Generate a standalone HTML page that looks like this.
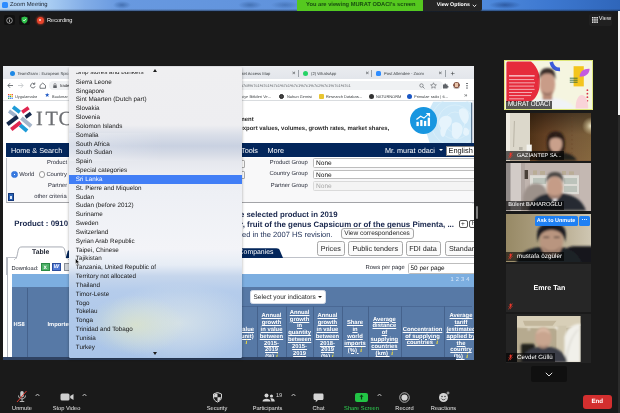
<!DOCTYPE html>
<html lang="en">
<head>
<meta charset="utf-8">
<title>Zoom Meeting</title>
<style>
*{box-sizing:border-box;margin:0;padding:0;text-rendering:geometricPrecision;-webkit-font-smoothing:antialiased}
html,body{width:620px;height:413px;overflow:hidden;background:#1b1b1b;font-family:"Liberation Sans",sans-serif;}
#root{position:relative;width:620px;height:413px;overflow:hidden;background:#1a1a1a;filter:blur(0.42px)}
.abs{position:absolute}
.t{position:absolute;white-space:nowrap;line-height:1}
/* ---------- window title bar ---------- */
#titlebar{left:0;top:0;width:620px;height:11.4px;background:radial-gradient(ellipse 9px 4px at 122px 5px,rgba(40,80,140,.55),rgba(40,80,140,0)),radial-gradient(ellipse 12px 4px at 250px 5px,rgba(40,80,140,.5),rgba(40,80,140,0)),radial-gradient(ellipse 14px 4px at 285px 5px,rgba(40,80,140,.4),rgba(40,80,140,0)),radial-gradient(ellipse 16px 4px at 505px 5px,rgba(20,50,110,.5),rgba(20,50,110,0)),linear-gradient(90deg,#b4d4f4 0,#a8ccf2 50px,#82ade7 85px,#6899e0 120px,#5f92dc 300px,#4f8adc 482px,#3d78d0 550px,#2f66ba 620px)}
#titlebar .fade{left:0;top:9.2px;width:620px;height:2.4px;background:linear-gradient(180deg,rgba(40,60,90,0),rgba(20,30,45,.85))}
#zicon{left:1.6px;top:2px;width:6.6px;height:6px;border-radius:1.6px;background:#2d8cff}
#banner{left:297px;top:0;width:126px;height:10.5px;background:#55c81f;color:#184d10;font-size:5.72px;font-weight:bold}
#viewopt{left:423px;top:0;width:59px;height:10.5px;background:#262626;color:#fff;font-size:5.25px;font-weight:bold;border-radius:0 0 2px 0}
/* ---------- zoom chrome ---------- */
.ibox{position:absolute;top:15px;width:11px;height:10.4px;border-radius:2px;background:#101010}
.tb{position:absolute;top:406.7px;font-size:5.7px;color:#e6e6e6;white-space:nowrap;line-height:1;transform:translateX(-50%)}
.car{position:absolute;top:391px;font-size:6px;color:#cfcfcf;line-height:1}
#end{left:582.5px;top:395px;width:29.5px;height:13.5px;border-radius:3px;background:#d32f2f;color:#fff;font-size:6.2px;font-weight:bold;text-align:center;line-height:13.5px}
#viewbtn{left:589px;top:14px;width:23px;height:12px;border-radius:2px;background:#202020;color:#f2f2f2;font-size:6.6px}

/* ---------- shared screen ---------- */
#share{left:3px;top:65.5px;width:471px;height:294px;overflow:hidden;background:#fff}
#sh{left:-3px;top:-65.5px;width:620px;height:413px}
#tabs{left:3px;top:65.5px;width:471px;height:13.5px;background:linear-gradient(180deg,#eaecf0,#e3e6eb)}
.tab{position:absolute;top:71.6px;font-size:4.15px;color:#3c4043;white-space:nowrap;line-height:1}
.tx{position:absolute;top:70.5px;font-size:6.2px;color:#3c4043;line-height:1}
#addr{left:3px;top:79px;width:471px;height:13px;background:#fff}
#pill{left:49px;top:81px;width:394px;height:8.6px;border-radius:4.3px;background:#eff1f3}
#bm{left:3px;top:92px;width:471px;height:9px;background:#fff;border-bottom:0.6px solid #d9dcdf}
.bk{position:absolute;top:94.9px;font-size:3.95px;color:#3c4043;white-space:nowrap;line-height:1}
.fav{position:absolute;top:94px;width:5px;height:5px;border-radius:50%}
#nav{left:6px;top:143.3px;width:468px;height:14.2px;background:#03265b}
.nv{position:absolute;top:146.7px;font-size:7.25px;color:#fff;white-space:nowrap;line-height:1}
.lb{position:absolute;font-size:5.85px;color:#262a38;white-space:nowrap;line-height:1}
.sel{position:absolute;left:313px;width:165px;height:9.8px;border:0.6px solid #bdbdbd;border-radius:1.5px;background:#fff;font-size:6.6px;color:#111;line-height:10.4px;padding-left:2px}
.hd{position:absolute;font-size:7.82px;font-weight:bold;color:#18264c;white-space:nowrap;line-height:1}
.btn{position:absolute;top:241px;height:14.6px;border:0.7px solid #a8a8a8;border-radius:2.5px;background:#fbfbfb;font-size:7.2px;color:#222;line-height:13.6px;text-align:center;white-space:nowrap;overflow:hidden}
.th{position:absolute;font-size:5.85px;font-weight:bold;color:#fff;text-align:center;line-height:6.85px;text-decoration:underline;text-decoration-thickness:0.55px;text-underline-offset:0.6px;white-space:nowrap;transform:translateX(-50%)}
.th i{color:#f2de3e;font-size:6.8px;font-family:"Liberation Serif",serif;font-weight:bold;text-decoration:none;display:inline-block}
.vs{position:absolute;top:306px;width:0.8px;height:52px;background:#45628c}

/* ---------- dropdown ---------- */
#dd{left:69px;top:67px;width:172.5px;height:290.5px;overflow:hidden;border-radius:1.5px;box-shadow:0 1px 3px rgba(0,0,0,.35);
background:radial-gradient(ellipse 50px 30px at 66px 258px,rgba(224,230,196,.7),rgba(224,232,206,.35) 55%,rgba(224,232,210,0) 100%),radial-gradient(ellipse 78px 40px at 110px 256px,rgba(226,234,232,.7),rgba(226,234,236,.35) 55%,rgba(226,234,236,0) 100%),linear-gradient(90deg,rgba(255,255,255,.3) 0,rgba(255,255,255,0) 55%) 0 66px/100% 28px no-repeat,linear-gradient(180deg,#efeff1 0,#eeeef1 58px,#d9dee8 68px,#c9d1e1 79px,#d6dbe6 87px,#e6e8ee 95px,#eceef3 108px,#eef0f5 130px,#f3f4f8 182px,#e6ecf5 198px,#c6d6ec 209px,#b5cceb 224px,#a9c4e8 290px)}
.di{position:absolute;left:6.8px;font-size:6.3px;color:#151515;white-space:nowrap;line-height:1}
#ddsel{left:0;top:108.2px;width:172.5px;height:8.6px;background:#417ef6}
/* ---------- participants ---------- */
#panel{left:476px;top:11px;width:140px;height:402px;background:#212121}
.tile{position:absolute;left:506.2px;width:85.2px;overflow:hidden;background:#222}
.nm{position:absolute;left:0;bottom:0.5px;height:8.9px;background:rgba(0,0,0,.62);color:#fff;font-size:6.6px;line-height:9px;padding:0 2px 0 2px;white-space:nowrap}
.mut{display:inline-block;width:5px;height:7px;vertical-align:-1.4px;margin-right:3.6px;margin-left:0.3px}
</style>
</head>
<body>
<div id="root">

<!-- title bar -->
<div id="titlebar" class="abs">
  <div class="abs fade"></div>
  <div id="zicon" class="abs"></div>
  <div class="t" style="left:10px;top:3.2px;font-size:5.9px;color:#1c2430">Zoom Meeting</div>
  <div id="banner" class="abs"><div class="t" style="left:9px;top:3.2px">You are viewing MURAT ODACI's screen</div></div>
  <div id="viewopt" class="abs"><div class="t" style="left:13.8px;top:3.3px">View Options</div><svg class="abs" style="left:49px;top:3.9px" width="5" height="4" viewBox="0 0 5 4"><path d="M0.8 0.8 L2.5 2.6 L4.2 0.8" fill="none" stroke="#fff" stroke-width="0.9"/></svg></div>
</div>

<!-- shared screen -->
<div id="share" class="abs"><div id="sh" class="abs">
  <!-- browser tab strip -->
  <div id="tabs" class="abs"></div>
  <div class="abs" style="left:9.8px;top:71px;width:5px;height:5px;border-radius:50%;background:#1e88e5"></div>
  <div class="tab" style="left:17.5px">TeamGram : European Spic</div>
  <div class="tab" style="left:240px">rket Access Map</div>
  <div class="tx" style="left:292px">×</div>
  <div class="abs" style="left:298.4px;top:70px;width:0.6px;height:7px;background:#9aa0a6"></div>
  <div class="abs" style="left:302.8px;top:71.2px;width:5px;height:5px;border-radius:50%;background:#25d366"></div>
  <div class="tab" style="left:311px">(2) WhatsApp</div>
  <div class="tx" style="left:365.5px">×</div>
  <div class="abs" style="left:371.4px;top:70px;width:0.6px;height:7px;background:#9aa0a6"></div>
  <div class="abs" style="left:376px;top:71px;width:5.2px;height:5.2px;border-radius:1.6px;background:#2d8cff"></div>
  <div class="tab" style="left:384px">Post Attendee - Zoom</div>
  <div class="tx" style="left:438.5px">×</div>
  <div class="abs" style="left:445.4px;top:70px;width:0.6px;height:7px;background:#9aa0a6"></div>
  <div class="tx" style="left:450.6px;top:69.8px;font-size:7.6px">+</div>
  <!-- address bar -->
  <div id="addr" class="abs"></div>
  <div id="pill" class="abs"></div>
  <svg class="abs" style="left:7px;top:82px" width="40" height="7" viewBox="0 0 80 14"><g fill="none" stroke="#5f6368" stroke-width="1.7"><path d="M12 7 H2 M6 2.5 L1.8 7 L6 11.5"/><path d="M22 7 H32 M28 2.5 L32.2 7 L28 11.5" stroke="#c4c7ca"/><path d="M55 4 A4.6 4.6 0 1 0 56.2 8.5 M55.5 1 V4.5 H52"/><path d="M66 7 L71.5 2 L77 7 V12.5 H66 Z"/></g></svg>
  <svg class="abs" style="left:52.5px;top:82.6px" width="4" height="5.5" viewBox="0 0 8 11"><rect x="0.5" y="4.5" width="7" height="6" rx="1" fill="#5f6368"/><path d="M2 4.5 V3 A2 2 0 0 1 6 3 V4.5" fill="none" stroke="#5f6368" stroke-width="1.2"/></svg>
  <div class="t" style="left:60px;top:83.6px;font-size:4.1px;color:#202124">trade</div>
  <div class="t" style="left:239.5px;top:83.6px;font-size:4.05px;color:#5f6368">%7c8%7c1%7c1%7c1%7c1%7c1%7c1%7c2%7c1%7c1%7c1</div>
  <svg class="abs" style="left:419px;top:82.5px" width="6" height="6" viewBox="0 0 12 12"><circle cx="5" cy="5" r="3.4" fill="none" stroke="#5f6368" stroke-width="1.3"/><path d="M7.6 7.6 L11 11" stroke="#5f6368" stroke-width="1.4"/></svg>
  <svg class="abs" style="left:429.5px;top:82px" width="7" height="7" viewBox="0 0 14 14"><path d="M7 1.5 L8.7 5.3 L12.8 5.7 L9.7 8.4 L10.6 12.4 L7 10.3 L3.4 12.4 L4.3 8.4 L1.2 5.7 L5.3 5.3 Z" fill="none" stroke="#5f6368" stroke-width="1.2"/></svg>
  <svg class="abs" style="left:442px;top:82px" width="7" height="7" viewBox="0 0 14 14"><path d="M2 5 H5 A1.6 1.6 0 1 1 8 5 H11 V8 A1.6 1.6 0 1 1 11 11 V13 H2 Z" fill="#5f6368"/></svg>
  <div class="abs" style="left:452.5px;top:81.6px;width:7.6px;height:7.6px;border-radius:50%;background:radial-gradient(circle at 50% 42%,#e8c3a8 0 35%,#8a5a4a 36% 60%,#b9b2b0 61%)"></div>
  <div class="abs" style="left:466.4px;top:82.6px;width:1.2px;height:1.2px;border-radius:50%;background:#5f6368;box-shadow:0 2.2px 0 #5f6368,0 4.4px 0 #5f6368"></div>
  <!-- bookmarks bar -->
  <div id="bm" class="abs"></div>
  <svg class="abs" style="left:7.5px;top:93.5px" width="5" height="5" viewBox="0 0 5 5"><rect x="0" y="0" width="1.3" height="1.3" fill="#ea4335"/><rect x="1.8" y="0" width="1.3" height="1.3" fill="#fbbc04"/><rect x="3.6" y="0" width="1.3" height="1.3" fill="#ea4335"/><rect x="0" y="1.8" width="1.3" height="1.3" fill="#4285f4"/><rect x="1.8" y="1.8" width="1.3" height="1.3" fill="#34a853"/><rect x="3.6" y="1.8" width="1.3" height="1.3" fill="#fbbc04"/><rect x="0" y="3.6" width="1.3" height="1.3" fill="#34a853"/><rect x="1.8" y="3.6" width="1.3" height="1.3" fill="#4285f4"/><rect x="3.6" y="3.6" width="1.3" height="1.3" fill="#4285f4"/></svg>
  <div class="bk" style="left:15px">Uygulamalar</div>
  <div class="bk" style="left:44.5px;top:93px;color:#1a56c4;font-size:6px">★</div>
  <div class="bk" style="left:52px">Bookmar</div>
  <div class="bk" style="left:240px">rkiye Bitkileri Ve...</div>
  <div class="fav" style="left:279px;background:#444;border:0.8px solid #222"></div>
  <div class="bk" style="left:287px">Nuhun Gemisi</div>
  <div class="fav" style="left:319px;border-radius:1px;background:#e8c531"></div>
  <div class="bk" style="left:326px">Research Databas...</div>
  <div class="fav" style="left:368.5px;background:#333"></div>
  <div class="bk" style="left:376px">NATURNORM</div>
  <div class="fav" style="left:406.5px;background:#1a56c4"></div>
  <div class="bk" style="left:414px">Primulae radix | 6...</div>
  <div class="bk" style="left:464px;font-size:6px;top:93px">»</div>

  <!-- page header -->
  <svg class="abs" style="left:416px;top:101px" width="58" height="43" viewBox="416 101 58 43"><path d="M433.3 101.7 L423 121.7 L430 144 H471.4 V101.7 Z" fill="#cde8f8"/><g fill="none" stroke="#dcf0fa" stroke-width="0.8"><circle cx="455" cy="122" r="10"/><circle cx="455" cy="122" r="17"/><circle cx="455" cy="122" r="24"/></g><g fill="#e6f4fc"><path d="M440 119 C443 115 449 115 451 118 C453 121 451 126 448 128 C445 131 446 136 443 137 C440 136 440 131 441 128 C439 125 438 122 440 119 Z"/><path d="M452 124 C455 121 460 122 462 126 C464 131 461 137 457 139 C453 139 451 135 452 131 Z"/><path d="M459 110 C462 107 466 108 468 112 C470 117 468 123 465 124 C462 122 458 115 459 110 Z"/><path d="M464 128 C467 127 470 130 469 134 C467 137 464 136 463 133 Z"/></g><rect x="471" y="102.6" width="1.5" height="41" fill="#5f7b96"/><rect x="472.5" y="101" width="1.6" height="43" fill="#e4e6ea"/></svg>
  <div class="abs" style="left:409.9px;top:106.9px;width:27px;height:27px;border-radius:50%;background:#1896e0"></div>
  <svg class="abs" style="left:415.4px;top:112.2px" width="16" height="15" viewBox="0 0 34 32"><g fill="#fff"><rect x="3" y="21" width="5" height="9"/><rect x="11" y="17" width="5" height="13"/><rect x="19" y="19" width="5" height="11"/><rect x="27" y="12" width="5" height="18"/></g><path d="M3 16 L12 9 L19 13 L29 4" fill="none" stroke="#fff" stroke-width="2.6"/><path d="M23 2 H32 V11 Z" fill="#fff"/></svg>
  <!-- ITC logo -->
  <svg class="abs" style="left:2px;top:100px" width="70" height="42" viewBox="0 0 620 372"><g fill="none" stroke-linecap="butt"><path d="M98 62 L158 108" stroke="#1e9bd7" stroke-width="34"/><path d="M62 98 L122 142" stroke="#9fb3cc" stroke-width="32"/><path d="M172 160 L258 232" stroke="#a6b6cb" stroke-width="36"/><path d="M160 222 L222 275" stroke="#1e9bd7" stroke-width="34"/><path d="M178 108 L236 68" stroke="#e0254f" stroke-width="32"/><path d="M208 152 L256 118" stroke="#14284b" stroke-width="32"/><path d="M48 215 L138 148" stroke="#14284b" stroke-width="36"/><path d="M82 262 L165 198" stroke="#e0254f" stroke-width="34"/></g></svg>
  <div class="t" style="left:36px;top:108.9px;font-family:'Liberation Serif',serif;font-size:20.2px;color:#6b6d71;-webkit-text-stroke:0.25px #6b6d71"><span style="letter-spacing:2.7px">I</span><span style="letter-spacing:0.6px">T</span>C</div>
  <div class="t" style="left:239.5px;top:117.8px;font-size:5.95px;font-weight:bold;color:#2b2b2b">ment</div>
  <div class="t" style="left:239.5px;top:126.5px;font-size:5.95px;font-weight:bold;color:#2b2b2b">export values, volumes, growth rates, market shares,</div>

  <!-- nav bar -->
  
  <div id="nav" class="abs"></div>
  <div class="nv" style="left:11px">Home &amp; Search</div>
  <div class="nv" style="left:241px">Tools</div>
  <div class="nv" style="left:267.5px">More</div>
  <div class="nv" style="left:385px">Mr. murat odaci</div>
  <div class="abs" style="left:439.2px;top:149.4px;width:0;height:0;border-left:2.1px solid transparent;border-right:2.1px solid transparent;border-top:2.4px solid #fff"></div>
  <div class="abs" style="left:445.5px;top:145.5px;width:32px;height:10px;background:#fff;border:0.6px solid #888;font-size:7.4px;color:#111;line-height:8.8px;padding-left:2px">English</div>

  <div class="abs" style="left:471.6px;top:157.5px;width:2.4px;height:46px;background:#e3e5e9"></div>
  <div class="abs" style="left:471.8px;top:157.5px;width:2px;height:14px;background:#7f8792"></div>
  <!-- search form -->
  <div class="abs" style="left:6px;top:157.5px;width:468px;height:45.4px;background:#f8f8f9;border-left:0.6px solid #b9bcc4;border-bottom:0.8px solid #a3a4a8"></div>
  <div class="lb" style="left:47px;top:160.9px">Product</div>
  <div class="abs" style="left:11.2px;top:171.2px;width:6.8px;height:6.8px;border-radius:50%;border:0.7px solid #2a6fdb;background:radial-gradient(circle,#fff 0 18%,#3a7be0 24% 100%)"></div>
  <div class="lb" style="left:19.2px;top:172.6px">World</div>
  <div class="abs" style="left:38.8px;top:171.2px;width:6.6px;height:6.6px;border-radius:50%;border:0.7px solid #9a9a9a;background:#fff"></div>
  <div class="lb" style="left:46.4px;top:172.6px">Country</div>
  <div class="lb" style="left:48px;top:183.9px">Partner</div>
  <div class="abs" style="left:7.5px;top:192.8px;width:6.4px;height:8.2px;background:#2a62b4;border:0.7px solid #16397a"><div class="abs" style="left:1.4px;top:1.8px;width:2.4px;height:3px;background:#dfe9fa"></div></div>
  <div class="lb" style="left:34.2px;top:194.5px">other criteria</div>
  <div class="lb" style="left:269.8px;top:161px">Product Group</div>
  <div class="lb" style="left:269.4px;top:172.4px">Country Group</div>
  <div class="lb" style="left:270.8px;top:183.8px">Partner Group</div>
  <div class="sel" style="top:158.4px">None</div>
  <div class="sel" style="top:169.6px">None</div>
  <div class="sel" style="top:180.8px;color:#a8a8a8;border-color:#dadada;background:#f4f4f4">None</div>
  <div class="abs" style="left:240px;top:159.5px;width:4.6px;height:8px;border:0.6px solid #aaa;border-left:none;border-radius:0 1.5px 1.5px 0;background:#fff"></div>
  <div class="abs" style="left:240px;top:170.7px;width:4.6px;height:8px;border:0.6px solid #aaa;border-left:none;border-radius:0 1.5px 1.5px 0;background:#fff"></div>

  <!-- product heading -->
  <div class="hd" style="left:14.2px;top:220.3px">Product : 0910</div>
  <div class="hd" style="left:240px;top:211px;font-size:7.8px">e selected product in 2019</div>
  <div class="hd" style="left:240px;top:220.8px;font-size:7.88px">r, fruit of the genus Capsicum or of the genus Pimenta, ...</div>
  <div class="abs" style="left:458.5px;top:219.5px;width:9px;height:8.5px;border:0.7px solid #555;border-radius:2px;background:#fff;font-size:6.5px;line-height:7px;text-align:center;color:#222">+</div>
  <div class="abs" style="left:469.4px;top:219.5px;width:9px;height:8.5px;border:0.7px solid #555;border-radius:2px;background:#fff;font-size:6px;line-height:7px;color:#222;padding-left:1.4px">H</div>
  <div class="t" style="left:240px;top:230.8px;font-size:7.54px;color:#1b2c54">ted in the 2007 HS revision.</div>
  <div class="btn" style="left:340.5px;top:228.3px;width:73px;height:11px;font-size:6.5px;line-height:9.6px;border-radius:3px">View correspondences</div>

  <!-- tabs + buttons -->
  <div class="abs" style="left:6px;top:257px;width:468px;height:19px;background:#fff;border-top:0.7px solid #bfc2c9;border-left:0.6px solid #b9bcc4"></div>
  <svg class="abs" style="left:14px;top:245.8px" width="56" height="14.2" viewBox="0 0 56 15" preserveAspectRatio="none"><path d="M0.5 14.5 C3 13.5 3.2 9 4.2 4.5 C4.8 2 5.6 1 8 1 H47 C49.4 1 50.2 2 50.8 4.5 C51.8 9 52 13.5 54.5 14.5 Z" fill="#fff" stroke="#8f949e" stroke-width="0.8"/><path d="M1 14.6 H54" stroke="#fff" stroke-width="1.6"/></svg>
  <svg class="abs" style="left:64.6px;top:250px" width="5" height="8.4" viewBox="0 0 5 8.4"><path d="M0.6 8.4 L2.6 1.6 C3 0.6 3.6 0.2 5 0.2 V8.4 Z" fill="#03265b"/></svg>
  <div class="t" style="left:32px;top:249.9px;font-size:6.8px;font-weight:bold;color:#1d2230">Table</div>
  <svg class="abs" style="left:236px;top:247.6px" width="50.6" height="10.6" viewBox="0 0 52 12.4" preserveAspectRatio="none"><path d="M0 12.4 V0.4 H41.5 C43.6 0.4 44.4 1.2 45.2 3.2 L48.6 12.4 Z" fill="#03265b"/></svg>
  <div class="t" style="left:238.6px;top:249.8px;font-size:6.9px;color:#fff">Companies</div>
  <div class="btn" style="left:317px;width:27.5px">Prices</div>
  <div class="btn" style="left:348px;width:54.5px">Public tenders</div>
  <div class="btn" style="left:405.5px;width:35px">FDI data</div>
  <div class="btn" style="left:444.5px;width:40px;text-align:left;padding-left:3.5px">Standar</div>

  <!-- download row -->
  <div class="t" style="left:11.5px;top:266.6px;font-size:5.7px;color:#20242e">Download:</div>
  <div class="abs" style="left:41px;top:262.8px;width:8.6px;height:8.2px;background:#4db168;border:0.6px solid #2a8a45"><div class="t" style="left:1.6px;top:0.9px;font-size:6px;font-weight:bold;color:#fff">x</div></div>
  <div class="abs" style="left:52px;top:262.8px;width:8.6px;height:8.2px;background:#4f78d6;border:0.6px solid #2c4d9c"><div class="t" style="left:0.8px;top:1px;font-size:5.6px;font-weight:bold;font-style:italic;color:#fff">W</div></div>
  <div class="abs" style="left:64px;top:262.8px;width:8px;height:8.2px;background:#cfd3d8;border:0.6px solid #8a8f97"></div>
  <div class="t" style="left:365.5px;top:266.3px;font-size:5.85px;color:#20242e">Rows per page</div>
  <div class="sel" style="left:407.5px;top:263.4px;width:70px;font-size:6.4px;height:10.4px;line-height:10.4px">50 per page</div>

  <!-- table -->
  <div class="abs" style="left:6px;top:275px;width:468px;height:86px;background:#fff"></div>
  <div class="abs" style="left:12px;top:274px;width:462.4px;height:13px;background:#7caee0"></div>
  <div class="abs" style="left:12px;top:286.6px;width:462.4px;height:73px;background:#5779a6"></div>
  <div class="abs" style="left:6.8px;top:258px;width:0.7px;height:101px;background:#b4b8c0"></div>
  <div class="t" style="left:450.5px;top:278.2px;font-size:5.7px;color:#d9e7f8;word-spacing:0.5px">1 2 3 4</div>
  <div class="abs" style="left:27.4px;top:288px;width:0.8px;height:70px;background:#45628c"></div>
  <div class="t" style="left:13.5px;top:323.4px;font-size:5.76px;font-weight:bold;color:#fff">HS8</div>
  <div class="t" style="left:47.5px;top:323.4px;font-size:5.76px;font-weight:bold;color:#fff">Importers</div>
  <div class="abs" style="left:250px;top:290.4px;width:76px;height:13.8px;border-radius:2.5px;background:#fff;border:0.6px solid #d5dbe6"></div>
  <div class="t" style="left:253.5px;top:294.8px;font-size:6.5px;color:#222">Select your indicators</div>
  <div class="abs" style="left:317.8px;top:296.4px;width:0;height:0;border-left:2.3px solid transparent;border-right:2.3px solid transparent;border-top:2.8px solid #222"></div>
  <div class="abs" style="left:241px;top:305.6px;width:231.4px;height:0.7px;background:#4a6894"></div>
  <div class="vs" style="left:257px"></div><div class="vs" style="left:286px"></div><div class="vs" style="left:313.2px"></div><div class="vs" style="left:341.6px"></div><div class="vs" style="left:368.2px"></div><div class="vs" style="left:400.6px"></div><div class="vs" style="left:444.4px"></div>
  <div class="th" style="left:246.5px;top:326.8px">value<br>/unit)<br><i>i</i></div>
  <div class="th" style="left:271.5px;top:313.2px">Annual<br>growth<br>in value<br>between<br>2015-<br>2019<br>(%) <i>i</i></div>
  <div class="th" style="left:299.6px;top:309.8px">Annual<br>growth<br>in<br>quantity<br>between<br>2015-<br>2019<br>(%) <i>i</i></div>
  <div class="th" style="left:327.4px;top:313.2px">Annual<br>growth<br>in value<br>between<br>2018-<br>2019<br>(%) <i>i</i></div>
  <div class="th" style="left:355px;top:320.2px">Share<br>in<br>world<br>imports<br>(%) <i>&nbsp;i</i></div>
  <div class="th" style="left:384.4px;top:316.6px">Average<br>distance<br>of<br>supplying<br>countries<br>(km) <i>&nbsp;i</i></div>
  <div class="th" style="left:422.5px;top:326.8px">Concentration<br>of supplying<br>countries <i>&nbsp;i</i></div>
  <div class="th" style="left:461px;top:313.2px">Average<br>tariff<br>(estimated<br>applied by<br>the<br>country<br>(%) <i>&nbsp;i</i></div>
  <div class="abs" style="left:3px;top:357.2px;width:453px;height:2.4px;background:#2f4262"></div>
</div></div>

<!-- country dropdown -->
<div id="dd" class="abs">
  <div id="ddsel" class="abs"></div>
  <div class="di" style="top:3.4px">Ship stores and bunkers</div>
  <div class="di" style="top:12.7px">Sierra Leone</div>
  <div class="di" style="top:21.5px">Singapore</div>
  <div class="di" style="top:30.4px">Sint Maarten (Dutch part)</div>
  <div class="di" style="top:39.2px">Slovakia</div>
  <div class="di" style="top:48.0px">Slovenia</div>
  <div class="di" style="top:56.9px">Solomon Islands</div>
  <div class="di" style="top:65.7px">Somalia</div>
  <div class="di" style="top:74.5px">South Africa</div>
  <div class="di" style="top:83.4px">South Sudan</div>
  <div class="di" style="top:92.2px">Spain</div>
  <div class="di" style="top:101.0px">Special categories</div>
  <div class="di" style="top:109.9px;color:#fff">Sri Lanka</div>
  <div class="di" style="top:118.7px">St. Pierre and Miquelon</div>
  <div class="di" style="top:127.5px">Sudan</div>
  <div class="di" style="top:136.4px">Sudan (before 2012)</div>
  <div class="di" style="top:145.2px">Suriname</div>
  <div class="di" style="top:154.0px">Sweden</div>
  <div class="di" style="top:162.9px">Switzerland</div>
  <div class="di" style="top:171.7px">Syrian Arab Republic</div>
  <div class="di" style="top:180.5px">Taipei, Chinese</div>
  <div class="di" style="top:189.4px">Tajikistan</div>
  <div class="di" style="top:198.2px">Tanzania, United Republic of</div>
  <div class="di" style="top:207.0px">Territory not allocated</div>
  <div class="di" style="top:215.9px">Thailand</div>
  <div class="di" style="top:224.7px">Timor-Leste</div>
  <div class="di" style="top:233.5px">Togo</div>
  <div class="di" style="top:242.4px">Tokelau</div>
  <div class="di" style="top:251.2px">Tonga</div>
  <div class="di" style="top:260.0px">Trinidad and Tobago</div>
  <div class="di" style="top:268.9px">Tunisia</div>
  <div class="di" style="top:277.7px">Turkey</div>
  <div class="abs" style="left:0;top:0;width:172.5px;height:5.4px;background:#efeff1"></div>
  <div class="abs" style="left:83.6px;top:2px;width:0;height:0;border-left:2.4px solid transparent;border-right:2.4px solid transparent;border-bottom:3px solid #1c1c1c"></div>
  <div class="abs" style="left:83.6px;top:284.8px;width:0;height:0;border-left:2.4px solid transparent;border-right:2.4px solid transparent;border-top:3px solid #1c1c1c"></div>
  <svg class="abs" style="left:6px;top:190.5px" width="5" height="8" viewBox="0 0 10 16"><path d="M1 1 V12 L3.8 9.6 L5.8 14.4 L7.6 13.6 L5.6 9 H9 Z" fill="#111" stroke="#fff" stroke-width="0.8"/></svg>
</div>

<!-- participants -->
<div class="abs" style="left:476px;top:206.3px;width:2px;height:12.7px;border-radius:1px;background:#7d7d7d"></div>
<svg width="0" height="0" style="position:absolute"><defs><filter id="b1" x="-20%" y="-20%" width="140%" height="140%"><feGaussianBlur stdDeviation="0.9"/></filter><filter id="b2" x="-20%" y="-20%" width="140%" height="140%"><feGaussianBlur stdDeviation="1.6"/></filter></defs></svg>

<!-- tile 1 : active speaker -->
<div class="abs" style="left:503.8px;top:59.8px;width:89.6px;height:50.4px;background:#dde678"></div>
<div class="tile" style="left:505.2px;top:61.2px;width:86.8px;height:47.6px;background:#f5f5e0">
  <svg class="abs" style="left:0;top:0" width="86.8" height="47.6" viewBox="0 0 86.8 47.6">
    <path d="M1.4 2.4 C1.4 1 2.2 0.4 3.6 0.4 H26 C33 6 36.4 16 34.6 26 C33.4 33 30 39 25 41 H1.4 Z" fill="#e62c3c"/>
    <g fill="#fff" opacity=".8"><rect x="4" y="14.2" width="25.6" height="1.3"/><rect x="4" y="18.3" width="25" height="0.75"/><rect x="4" y="21.5" width="26" height="0.75"/><rect x="4" y="24.7" width="25" height="0.75"/><rect x="4" y="27.9" width="25.6" height="0.75"/><rect x="4" y="31.1" width="23" height="0.75"/><rect x="4" y="34.3" width="22" height="0.75"/><rect x="4" y="37.5" width="15" height="0.75"/></g>
    <path d="M46.2 1 C47.4 6.4 50.8 8.6 55 8.4" fill="none" stroke="#3b5bdb" stroke-width="3.6"/>
    <rect x="68.6" y="5.2" width="10.2" height="20.2" fill="#f4c51c"/>
    <path d="M74.6 15.8 C74.6 10.4 79 7.4 84.6 7.8 C84.6 12.8 80.6 16 74.6 15.8 Z" fill="#c45be0"/>
    <g stroke="#1e5c3a" stroke-width="0.8"><path d="M64.8 17.2 H72.6 M64.8 19.2 H72.6 M64.8 21.2 H72.6"/></g>
    <g fill="#d8344a"><circle cx="82.4" cy="29.2" r="0.9"/><circle cx="82.4" cy="32.7" r="0.9"/><circle cx="82.4" cy="36.2" r="0.9"/><circle cx="82.4" cy="39.8" r="0.9"/></g>
    <path d="M70.6 47.6 C70.4 29.6 83.4 29.6 83.2 47.6 Z" fill="#f9d3d8"/>
    <g filter="url(#b1)">
      <path d="M22 47.6 C24 41 32 38 39 36.8 H47 C58 38 66 41 70 47.6 Z" fill="#f0f3f7"/>
      <rect x="37.6" y="31" width="9.6" height="8" fill="#b98a76"/>
      <ellipse cx="42.4" cy="23.4" rx="7.8" ry="12.6" fill="#c99c88"/>
      <path d="M34.4 19 C34 9.6 38 7 42.6 7 C47.6 7 51 9.6 50.4 19 C48.6 14 46.4 12.4 42.4 12.4 C38.4 12.4 36.2 14 34.4 19 Z" fill="#3a2f2a"/>
      <path d="M36.4 29 C38.4 37.4 46.4 37.4 48.4 29 C46 33 38.8 33 36.4 29 Z" fill="#8d6a5c" opacity=".7"/>
    </g>
  </svg>
  <div class="nm" style="left:0.8px;bottom:0.2px;height:7.6px;line-height:8px;font-size:6.3px;letter-spacing:-0.12px;padding-right:1.4px;background:rgba(20,20,20,.7)"><span style="display:inline-block;transform:scale(1,1.14);transform-origin:50% 60%">MURAT ODACI</span></div>
</div>

<!-- tile 2 -->
<div class="tile" style="top:113.1px;height:47.6px;background:#7a5234">
  <svg class="abs" style="left:0;top:0" width="86.5" height="47.6" viewBox="0 0 86.5 47.6">
    <defs><linearGradient id="wd" x1="0" x2="1" y1="0" y2="0"><stop offset="0" stop-color="#553619"/><stop offset=".25" stop-color="#6b4526"/><stop offset=".7" stop-color="#80603c"/><stop offset="1" stop-color="#86683f"/></linearGradient><linearGradient id="wv" x1="0" x2="0" y1="0" y2="1"><stop offset="0" stop-color="#000" stop-opacity=".42"/><stop offset=".45" stop-color="#000" stop-opacity=".08"/><stop offset="1" stop-color="#000" stop-opacity="0"/></linearGradient><radialGradient id="gl" cx="85" cy="13" r="9" gradientUnits="userSpaceOnUse"><stop offset="0" stop-color="#f4eccc" stop-opacity=".95"/><stop offset=".5" stop-color="#e8dcb0" stop-opacity=".45"/><stop offset="1" stop-color="#e8dcb0" stop-opacity="0"/></radialGradient></defs>
    <rect x="24" y="0" width="62.5" height="47.6" fill="url(#wd)"/><rect x="24" y="0" width="62.5" height="47.6" fill="url(#wv)"/><rect x="66" y="0" width="20.5" height="30" fill="url(#gl)"/>
    <rect x="0" y="0" width="24" height="47.6" fill="#dcd8cb"/>
    <rect x="0" y="0" width="4" height="47.6" fill="#eeebe2"/>
    <path d="M8.4 8 L7.6 34" stroke="#b9b4a6" stroke-width="1"/>
    <rect x="20.6" y="31.6" width="5.2" height="7.4" fill="#f2f2ee"/>
    <rect x="13" y="34" width="3.6" height="3" fill="#b8b4a8"/>
    <path d="M66 4 V40" stroke="#6a4528" stroke-width="0.6" stroke-dasharray="1.4 3"/>
    <g filter="url(#b1)">
      <path d="M30 47.6 C33 41 40 39.6 46 39 H54 C62 40 68 42 71 47.6 Z" fill="#23201f"/>
      <path d="M41.4 36 C39.6 24 42 18.4 49.6 18.4 C57.4 18.4 60 24 58.2 37 C57 42 43 42 41.4 36 Z" fill="#2a1c17"/>
      <ellipse cx="49.8" cy="31" rx="6.4" ry="8.6" fill="#c9a08b"/>
      <path d="M43.4 27 C44 21 55.6 21 56.2 27 C53 24.4 46.6 24.4 43.4 27 Z" fill="#2a1c17"/>
    </g>
  </svg>
  <div class="nm"><svg class="mut" viewBox="0 0 10 14"><rect x="3.4" y="0.8" width="3.4" height="7" rx="1.7" fill="#e8392c"/><path d="M1.6 6 C1.6 10.6 8.6 10.6 8.6 6" fill="none" stroke="#e8392c" stroke-width="1.1"/><rect x="4.5" y="9.6" width="1.2" height="2.6" fill="#e8392c"/><path d="M0.6 13 L9.2 1" stroke="#e8392c" stroke-width="1.3"/></svg><span style="font-size:5.5px">GAZIANTEP SA...</span></div>
</div>

<!-- tile 3 -->
<div class="tile" style="top:163.4px;height:47.4px;background:#c0b4ae">
  <svg class="abs" style="left:0;top:0" width="86.5" height="47.6" viewBox="0 0 86.5 47.6">
    <rect x="0" y="0" width="15" height="47.6" fill="#d2cbc7"/><rect x="0" y="0" width="4.5" height="47.6" fill="#908a88"/>
    <rect x="15" y="0" width="4" height="47.6" fill="#b3a8a3"/>
    <rect x="18.6" y="7" width="3.4" height="9" fill="#4a4038"/>
    <rect x="24" y="12.2" width="49" height="19" fill="#dddcd6"/>
    <g fill="#b9ad96"><rect x="27" y="7.4" width="4" height="4.4"/><rect x="34" y="8" width="5" height="3.8"/><rect x="56" y="8" width="4" height="3.8"/><rect x="63" y="8.4" width="5" height="3.4"/></g>
    <g fill="#bcc3bb"><rect x="27" y="15" width="13" height="6"/><rect x="58" y="15" width="13" height="6"/><rect x="58" y="23" width="13" height="6"/></g>
    <rect x="74" y="0" width="12.5" height="47.6" fill="#c4b8b2"/>
    <g filter="url(#b1)">
      <path d="M17 40 C16 28 22 20.6 30 20.6 C38 20.6 42 26 42 40 V47.6 H17 Z" fill="#9c918a"/>
      <path d="M22 47.6 C25 36 33 32 42 30.6 H56 C68 32 76 37 80 47.6 Z" fill="#252932"/>
      <path d="M44 31 L49 41 L54 31 Z" fill="#e8e8ec"/>
      <ellipse cx="48.8" cy="24.6" rx="8.2" ry="11.4" fill="#c59c87"/>
      <path d="M40.2 21 C39.6 11.6 44 9 49 9 C54.4 9 58 11.6 57.4 21 C56 15.6 53 13.6 48.8 13.6 C44.6 13.6 41.6 15.6 40.2 21 Z" fill="#4b4644"/>
      <path d="M43 30 C45 37.6 52.6 37.6 54.6 30 C52 33.6 45.6 33.6 43 30 Z" fill="#8e7468" opacity=".8"/>
    </g>
  </svg>
  <div class="nm" style="font-size:5.75px;padding-right:1.4px">Bülent BAHAROĞLU</div>
</div>

<!-- tile 4 -->
<div class="tile" style="top:214px;height:47.6px;background:#a39572">
  <svg class="abs" style="left:0;top:0" width="86.5" height="47.6" viewBox="0 0 86.5 47.6">
    <defs><linearGradient id="ol" x1="0" x2="1" y1="0" y2="0"><stop offset="0" stop-color="#978965"/><stop offset=".5" stop-color="#b0a385"/><stop offset="1" stop-color="#d0c8b4"/></linearGradient></defs>
    <rect width="86.5" height="47.6" fill="url(#ol)"/>
    <g filter="url(#b1)" transform="translate(-3 0.5) scale(1.04)">
      <path d="M60 47.6 V36 C60 32 64 30.6 70 30.6 H86.5 V47.6 Z" fill="#17181c"/>
      <path d="M12 47.6 C15 37 24 33 34 31.6 H58 C68 34 74 40 76 47.6 Z" fill="#1e2026"/>
      <ellipse cx="46.6" cy="25.4" rx="11" ry="15" fill="#b9957f"/>
      <path d="M33.6 27 C30.6 13 36 8.4 46.6 8.4 C57.6 8.4 63 13 59.6 27 C58.6 20 55 15 46.6 15 C38.4 15 34.6 20 33.6 27 Z" fill="#1d1d22"/>
      <path d="M38 30 C41 42 52.6 42 55.4 30 C52 36 41.4 36 38 30 Z" fill="#8c6e5f" opacity=".7"/>
      <path d="M39 22 H44.4 M49 22 H54.4" stroke="#3a2c28" stroke-width="1.4"/>
    </g>
  </svg>
  <div class="abs" style="left:28.4px;top:1.6px;width:43px;height:10px;border-radius:1.6px;background:#1f80f3;color:#fff;font-size:5.46px;font-weight:bold;line-height:10px;text-align:center;white-space:nowrap">Ask to Unmute</div>
  <div class="abs" style="left:73.2px;top:1.6px;width:10.4px;height:10px;border-radius:1.6px;background:#1f80f3;color:#fff;font-size:6px;font-weight:bold;line-height:7px;text-align:center;letter-spacing:0.2px">...</div>
  <div class="nm"><svg class="mut" viewBox="0 0 10 14"><rect x="3.4" y="0.8" width="3.4" height="7" rx="1.7" fill="#e8392c"/><path d="M1.6 6 C1.6 10.6 8.6 10.6 8.6 6" fill="none" stroke="#e8392c" stroke-width="1.1"/><rect x="4.5" y="9.6" width="1.2" height="2.6" fill="#e8392c"/><path d="M0.6 13 L9.2 1" stroke="#e8392c" stroke-width="1.3"/></svg><span style="font-size:6.33px">mustafa özgüler</span></div>
</div>

<!-- tile 5 -->
<div class="tile" style="top:264.3px;height:47.8px;background:#262626">
  <div class="t" style="left:0;width:86.5px;text-align:center;top:20.4px;font-size:7.14px;font-weight:bold;color:#fff">Emre Tan</div>
  <div class="nm" style="background:transparent"><svg class="mut" viewBox="0 0 10 14"><rect x="3.4" y="0.8" width="3.4" height="7" rx="1.7" fill="#e8392c"/><path d="M1.6 6 C1.6 10.6 8.6 10.6 8.6 6" fill="none" stroke="#e8392c" stroke-width="1.1"/><rect x="4.5" y="9.6" width="1.2" height="2.6" fill="#e8392c"/><path d="M0.6 13 L9.2 1" stroke="#e8392c" stroke-width="1.3"/></svg></div>
</div>

<!-- tile 6 -->
<div class="tile" style="top:314.4px;height:48.2px;background:#242424">
  <svg class="abs" style="left:11px;top:1.6px" width="63.4" height="46.4" viewBox="0 0 64.2 48" preserveAspectRatio="none">
    <rect width="64.2" height="48" fill="#bfb49a"/>
    <path d="M0 0 H64.2 V10 L40 14 L0 12 Z" fill="#d8cfb8"/>
    <path d="M6 5 H40 L36 10 H8 Z" fill="#c2b69b"/>
    <rect x="0" y="13" width="40" height="22" fill="#b6aa8f"/>
    <rect x="40" y="10" width="10" height="38" fill="#cfc6ae"/>
    <g filter="url(#b1)">
      <path d="M48 48 V22 C50 12 58 8 64.2 8 V48 Z" fill="#f1f0ea"/>
      <path d="M50 44 C52 30 56 20 62 14" stroke="#cfcdc6" stroke-width="1" fill="none"/>
      <circle cx="12" cy="13.6" r="1" fill="#fff"/><circle cx="40" cy="12.6" r="1.2" fill="#fff"/>
      <rect x="4" y="28.6" width="14" height="12" rx="2" fill="#23221f"/>
      <path d="M4 48 C6 37 13 33.6 21 32 H34 C43 33.6 49 39 51 48 Z" fill="#3b3e47"/>
      <ellipse cx="26.6" cy="22.6" rx="8.2" ry="11" fill="#c9a58f"/>
      <path d="M19.6 19 C19.6 10.6 33.6 10.6 33.6 19 C30 15 23 15 19.6 19 Z" fill="#d9b9a4"/>
      <path d="M21.6 29 C23 35 30.4 35 31.8 29 C29.6 31.6 23.8 31.6 21.6 29 Z" fill="#9a7b6b" opacity=".7"/>
    </g>
  </svg>
  <div class="nm"><svg class="mut" viewBox="0 0 10 14"><rect x="3.4" y="0.8" width="3.4" height="7" rx="1.7" fill="#e8392c"/><path d="M1.6 6 C1.6 10.6 8.6 10.6 8.6 6" fill="none" stroke="#e8392c" stroke-width="1.1"/><rect x="4.5" y="9.6" width="1.2" height="2.6" fill="#e8392c"/><path d="M0.6 13 L9.2 1" stroke="#e8392c" stroke-width="1.3"/></svg><span style="font-size:6.15px">Cevdet Güllü</span></div>
</div>

<!-- next page chevron -->
<div class="abs" style="left:531px;top:366px;width:36px;height:16.4px;border-radius:2px;background:#101010"></div>
<svg class="abs" style="left:544.6px;top:371.6px" width="8" height="5" viewBox="0 0 8 5"><path d="M0.8 0.8 L4 4 L7.2 0.8" fill="none" stroke="#e4e4e4" stroke-width="1"/></svg>

<div class="abs" style="left:618.3px;top:10.5px;width:1.7px;height:104px;background:#f4f4f4"></div>
<div class="abs" style="left:618.3px;top:114.5px;width:1.7px;height:299px;background:#2b2b2b"></div>

<!-- top-left meeting icons -->
<div class="ibox" style="left:4px"><svg class="abs" style="left:2px;top:1.7px" width="7" height="7" viewBox="0 0 14 14"><circle cx="7" cy="7" r="5.6" fill="none" stroke="#d8d8d8" stroke-width="1.3"/><rect x="6.3" y="6" width="1.5" height="4.2" fill="#d8d8d8"/><rect x="6.3" y="3.6" width="1.5" height="1.5" fill="#d8d8d8"/></svg></div>
<div class="ibox" style="left:19.4px"><svg class="abs" style="left:2px;top:1.3px" width="7" height="8" viewBox="0 0 14 16"><path d="M7 0.8 L13 3 V8 C13 11.6 10.4 14 7 15.4 C3.6 14 1 11.6 1 8 V3 Z" fill="#2fc04a"/><path d="M4.2 7.8 L6.3 10 L10 5.6" fill="none" stroke="#eafff0" stroke-width="1.6"/></svg></div>
<div class="abs" style="left:36.5px;top:16.8px;width:7px;height:7px;border-radius:50%;background:#e8452c;box-shadow:0 0 2px 1px rgba(232,69,44,.45)"><div class="abs" style="left:2.3px;top:2.3px;width:2.4px;height:2.4px;border-radius:50%;background:#ffd9d0"></div></div>
<div class="t" style="left:47px;top:18.6px;font-size:5.7px;color:#f0f0f0;letter-spacing:-0.05px">Recording</div>

<!-- view button -->
<div id="viewbtn" class="abs">
  <svg class="abs" style="left:2.5px;top:3px" width="6" height="6" viewBox="0 0 6 6"><g fill="#f2f2f2"><rect x="0" y="0" width="1.5" height="1.5"/><rect x="2.2" y="0" width="1.5" height="1.5"/><rect x="4.4" y="0" width="1.5" height="1.5"/><rect x="0" y="2.2" width="1.5" height="1.5"/><rect x="2.2" y="2.2" width="1.5" height="1.5"/><rect x="4.4" y="2.2" width="1.5" height="1.5"/><rect x="0" y="4.4" width="1.5" height="1.5"/><rect x="2.2" y="4.4" width="1.5" height="1.5"/><rect x="4.4" y="4.4" width="1.5" height="1.5"/></g></svg>
  <div class="t" style="left:9.8px;top:3px;font-size:5.7px">View</div>
</div>

<!-- bottom toolbar -->
<div id="toolbar">
  <!-- unmute -->
  <svg class="abs" style="left:16px;top:390px" width="12" height="13" viewBox="0 0 24 26"><rect x="8.5" y="2" width="7" height="13" rx="3.5" fill="#c9c9c9"/><path d="M5 11 C5 20 19 20 19 11" fill="none" stroke="#c9c9c9" stroke-width="1.8"/><rect x="11.2" y="18" width="1.8" height="4.5" fill="#c9c9c9"/><rect x="7.5" y="22" width="9" height="1.8" fill="#c9c9c9"/><path d="M2 24 L21 2" stroke="#e0392f" stroke-width="2"/></svg>
  <div class="tb" style="left:22px">Unmute</div>
  <svg class="car" style="left:35px;top:393px" width="5" height="4" viewBox="0 0 5 4"><path d="M0.6 3 L2.5 1 L4.4 3" fill="none" stroke="#cfcfcf" stroke-width="0.9"/></svg>
  <!-- stop video -->
  <svg class="abs" style="left:60px;top:393px" width="14" height="8" viewBox="0 0 28 16"><rect x="1" y="1" width="18" height="14" rx="3" fill="#cfcfcf"/><path d="M20.5 6 L27 2 V14 L20.5 10 Z" fill="#cfcfcf"/></svg>
  <div class="tb" style="left:66.5px">Stop Video</div>
  <svg class="car" style="left:82px;top:393px" width="5" height="4" viewBox="0 0 5 4"><path d="M0.6 3 L2.5 1 L4.4 3" fill="none" stroke="#cfcfcf" stroke-width="0.9"/></svg>
  <!-- security -->
  <svg class="abs" style="left:212.5px;top:392px" width="9" height="10.5" viewBox="0 0 18 21"><path d="M9 1 L17 4 V10 C17 15 13.5 18.5 9 20 C4.5 18.5 1 15 1 10 V4 Z" fill="none" stroke="#d4d4d4" stroke-width="2"/><path d="M9 2.5 V10.5 H2.2 V4.8 Z" fill="#d4d4d4"/><path d="M9 10.5 H15.8 C15.6 14.4 13 17.2 9 18.8 Z" fill="#d4d4d4"/></svg>
  <div class="tb" style="left:217px">Security</div>
  <!-- participants -->
  <svg class="abs" style="left:261.5px;top:393px" width="13" height="9" viewBox="0 0 26 18"><circle cx="9" cy="5" r="4" fill="#d4d4d4"/><path d="M1 17 C1 9.5 17 9.5 17 17 Z" fill="#d4d4d4"/><circle cx="19" cy="6" r="3.2" fill="#d4d4d4"/><path d="M18.5 17 C18.7 13.5 17.5 12 16.5 11 C20 9.5 25.5 11 25.5 17 Z" fill="#d4d4d4"/></svg>
  <div class="t" style="left:276px;top:393.6px;font-size:5.6px;color:#dcdcdc">19</div>
  <div class="tb" style="left:267.5px">Participants</div>
  <svg class="car" style="left:290.5px;top:393px" width="5" height="4" viewBox="0 0 5 4"><path d="M0.6 3 L2.5 1 L4.4 3" fill="none" stroke="#cfcfcf" stroke-width="0.9"/></svg>
  <!-- chat -->
  <svg class="abs" style="left:313px;top:392.5px" width="11" height="10" viewBox="0 0 22 20"><path d="M4 1 H18 C20 1 21 2.2 21 4 V11 C21 12.8 20 14 18 14 H10 L5.5 18.5 V14 H4 C2 14 1 12.8 1 11 V4 C1 2.2 2 1 4 1 Z" fill="#d4d4d4"/></svg>
  <div class="tb" style="left:318.5px">Chat</div>
  <!-- share screen -->
  <div class="abs" style="left:355px;top:392.5px;width:13px;height:9.5px;border-radius:2px;background:#22c445"></div>
  <svg class="abs" style="left:359px;top:394.3px" width="5" height="6" viewBox="0 0 10 12"><path d="M5 1 L9 5.5 H6.2 V11 H3.8 V5.5 H1 Z" fill="#0b3b14"/></svg>
  <div class="tb" style="left:361.5px;color:#2fd653">Share Screen</div>
  <svg class="car" style="left:377px;top:393px" width="5" height="4" viewBox="0 0 5 4"><path d="M0.6 3 L2.5 1 L4.4 3" fill="none" stroke="#cfcfcf" stroke-width="0.9"/></svg>
  <!-- record -->
  <svg class="abs" style="left:399px;top:392px" width="11" height="11" viewBox="0 0 22 22"><circle cx="11" cy="11" r="9.6" fill="none" stroke="#d4d4d4" stroke-width="1.6"/><circle cx="11" cy="11" r="6.2" fill="#d4d4d4"/></svg>
  <div class="tb" style="left:404.5px">Record</div>
  <!-- reactions -->
  <svg class="abs" style="left:437.5px;top:391px" width="12" height="12" viewBox="0 0 24 24"><circle cx="11" cy="13" r="9" fill="#d4d4d4"/><circle cx="8" cy="11" r="1.3" fill="#1a1a1a"/><circle cx="14" cy="11" r="1.3" fill="#1a1a1a"/><path d="M6.5 15 C8.5 18.5 13.5 18.5 15.5 15" fill="none" stroke="#1a1a1a" stroke-width="1.4"/><path d="M20 1 V7 M17 4 H23" stroke="#d4d4d4" stroke-width="1.6"/></svg>
  <div class="tb" style="left:443.5px">Reactions</div>
  <div id="end" class="abs">End</div>
</div>

</div>
</body>
</html>
